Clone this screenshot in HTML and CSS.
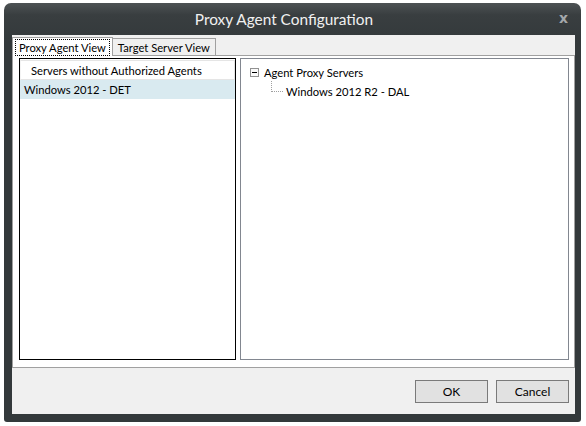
FILE: index.html
```html
<!DOCTYPE html>
<html lang="en">
<head>
    <meta charset="UTF-8">
    <title>Proxy Agent Configuration</title>
    <link rel="stylesheet" href="styles.css">
</head>
<body>
    <div class="dialog">
        <div class="title-bar">
            <div class="title">Proxy Agent Configuration</div>
            <div class="close">x</div>
        </div>
        <div class="client">
            <ul class="tabs">
                <li class="tab active"><span>Proxy Agent View</span></li>
                <li class="tab">Target Server View</li>
            </ul>
            <div class="tab-page">
                <div class="list-panel">
                    <div class="list-header">Servers without Authorized Agents</div>
                    <div class="list-row selected">Windows 2012 - DET</div>
                </div>
                <div class="tree-panel">
                    <div class="tree-root">
                        <span class="toggle"></span>
                        <span>Agent Proxy Servers</span>
                    </div>
                    <div class="tree-child">
                        <span class="branch"></span>
                        <span>Windows 2012 R2 - DAL</span>
                    </div>
                </div>
            </div>
            <div class="footer">
                <button class="btn">OK</button>
                <button class="btn">Cancel</button>
            </div>
        </div>
    </div>
</body>
</html>
```

FILE: styles.css
```css
body {
    margin: 0;
    background: #fff;
    font-family: Lato, "Open Sans", sans-serif;
    font-size: 11.2px;
    color: #000;
}
.dialog {
    margin: 3px 0 0 4px;
    width: 577px;
    height: 419px;
    box-sizing: border-box;
    padding: 0 6px 8px 8px;
    background: linear-gradient(#4d5254, #393e40 12px, #33393b 40px);
    border-radius: 7px 7px 3px 3px;
    display: flex;
    flex-direction: column;
}
.title-bar {
    height: 32px;
    display: flex;
    align-items: center;
    justify-content: center;
    position: relative;
}
.title {
    color: #f0f0f0;
    font-size: 15.4px;
    margin-right: 19px;
}
.close {
    position: absolute;
    right: 7px;
    top: 7px;
    color: #a4a8ab;
    font-family: "DejaVu Sans", sans-serif;
    font-size: 14px;
    font-weight: bold;
}
.client {
    flex: 1;
    background: #f0f0f0;
    display: flex;
    flex-direction: column;
}
.tabs {
    list-style: none;
    margin: 0;
    padding: 2px 0 0 1px;
    display: flex;
    align-items: flex-end;
    height: 18px;
}
.tab {
    height: 16px;
    line-height: 17px;
    padding: 0 5px;
    border: 1px solid #a0a0a0;
    border-bottom: 0;
    background: #f0f0f0;
    margin-left: -1px;
}
.tab.active {
    height: 18px;
    background: #fff;
    padding: 0 2px;
    position: relative;
    z-index: 1;
    margin-bottom: -1px;
}
.tab.active span {
    display: block;
    border: 1px dotted #000;
    line-height: 15px;
    padding: 0 3px;
    margin-top: 1px;
}
.tab-page {
    flex: 1;
    background: #fff;
    border: 1px solid #a0a0a0;
    padding: 2px 5px 7px 6px;
    display: flex;
    gap: 4px;
}
.list-panel {
    width: 215px;
    border: 1px solid #000;
}
.list-header {
    margin: 1px 0 0 0;
    height: 18px;
    line-height: 20px;
    padding-left: 10px;
    border: 1px solid #e5e5e5;
    border-left-color: #f4f4f4;
    background: #fff;
}
.list-row {
    height: 19px;
    line-height: 20px;
    padding-left: 4px;
}
.list-row.selected {
    background: #d9eaf0;
}
.tree-panel {
    flex: 1;
    border: 1px solid #828790;
    padding: 4px 0 0 9px;
}
.tree-root, .tree-child {
    display: flex;
    align-items: center;
    height: 19px;
}
.toggle {
    width: 7px;
    height: 7px;
    border: 1px solid #919191;
    margin-right: 5px;
    position: relative;
    background: #fafafa;
}
.toggle::after {
    content: '';
    position: absolute;
    left: 1px;
    top: 3px;
    width: 5px;
    height: 1px;
    background: #000;
}
.tree-child {
    padding-left: 21px;
}
.branch {
    width: 11px;
    height: 10px;
    margin: -10px 3px 0 0;
    border-left: 1px dotted #a0a0a0;
    border-bottom: 1px dotted #a0a0a0;
}
.footer {
    height: 46px;
    display: flex;
    justify-content: flex-end;
    align-items: center;
    gap: 8px;
    padding-right: 6px;
}
.btn {
    width: 73px;
    height: 23px;
    border: 1px solid #7a7a7a;
    background: #e1e1e1;
    font-family: inherit;
    font-size: 12px;
    padding: 0;
}
```
